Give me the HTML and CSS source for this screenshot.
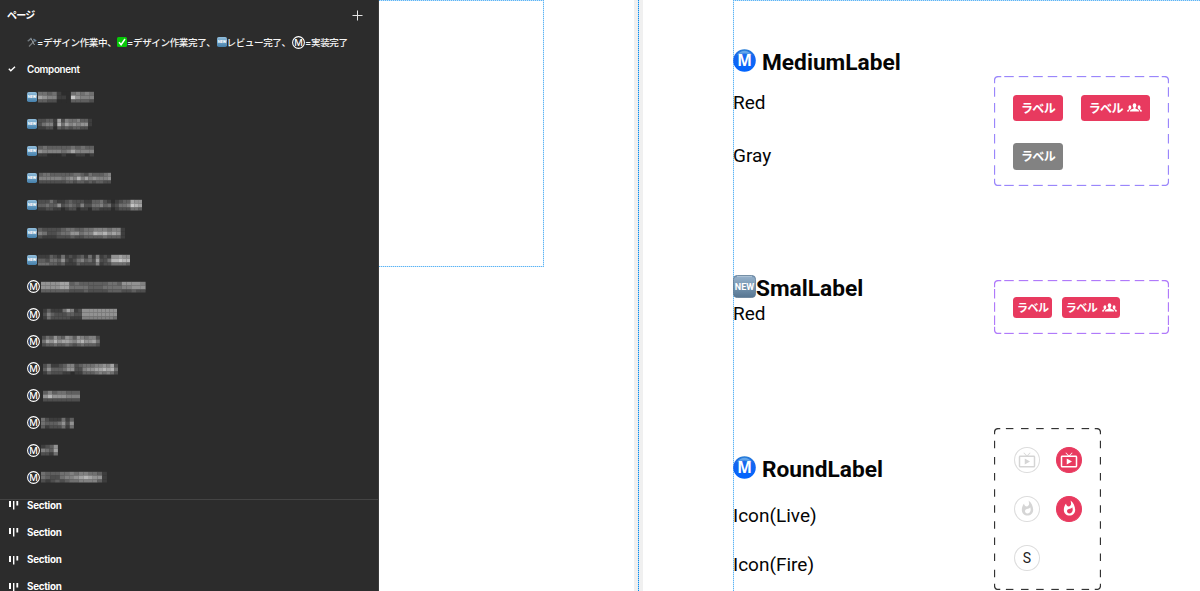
FILE: index.html
```html
<!DOCTYPE html>
<html lang="ja">
<head>
<meta charset="utf-8">
<title>Component</title>
<link rel="stylesheet" href="styles.css">
</head>
<body>
<svg class="defs" width="0" height="0" aria-hidden="true">
  <defs>
    <linearGradient id="newFill" x1="0" y1="0" x2="0" y2="1"><stop offset="0" stop-color="#7196b8"/><stop offset=".12" stop-color="#91adc7"/><stop offset=".5" stop-color="#7595b0"/><stop offset="1" stop-color="#567591"/></linearGradient>
    <linearGradient id="newSmall" x1="0" y1="0" x2="0" y2="1"><stop offset="0" stop-color="#91bddb"/><stop offset="1" stop-color="#4680ab"/></linearGradient>
    <linearGradient id="metroFill" x1="0" y1="0" x2="0" y2="1"><stop offset="0" stop-color="#287ed5"/><stop offset=".3" stop-color="#1767ef"/><stop offset="1" stop-color="#0064ff"/></linearGradient>
    <symbol id="new" viewBox="0 0 10 10"><rect width="10" height="10" rx="1.8" fill="url(#newSmall)"/><text x="5" y="6.4" class="new-text-small">NEW</text></symbol>
    <symbol id="new-large" viewBox="0 0 23 23"><rect x=".4" y=".4" width="22.2" height="22.2" rx="4" fill="url(#newFill)" stroke="#5a7690" stroke-width=".8"/><path d="M4 1.7h15" stroke="#b7cadb"/><text x="11.5" y="14.8" class="new-text">NEW</text></symbol>
    <symbol id="m" viewBox="0 0 13 13"><circle cx="6.5" cy="6.5" r="5.9" fill="none" stroke="#fff" stroke-width="1.1"/><text x="6.5" y="9.8" class="m-text">M</text></symbol>
    <symbol id="metro" viewBox="0 0 23 23"><circle cx="11.5" cy="11.5" r="11.3" fill="url(#metroFill)"/><path d="M4 5.8Q11.5-2.5 19 5.8Q11.5 3.2 4 5.8" fill="#79b6ed" opacity=".75"/><text x="11.5" y="17" class="metro-text">M</text></symbol>
    <symbol id="people" viewBox="0 0 15 9"><g fill="#fff"><ellipse cx="7.5" cy="2.5" rx="1.8" ry="2.3"/><path d="M6.6 3.5h1.8v2.1l2.8 1.1q.9.4.9 1.9H2.9q0-1.5.9-1.9l2.8-1.1zM2.9 2.2Q4.6 2.2 4.3 4.4L3.8 5.9 2.3 7.1 2 8.6H0Q0 7.2.9 6.8L2.2 6.2Q1.4 5.6 1.5 3.8 1.6 2.2 2.9 2.2M12.1 2.2Q10.4 2.2 10.7 4.4L11.2 5.9 12.7 7.1 13 8.6h2Q15 7.2 14.1 6.8L12.8 6.2Q13.6 5.6 13.5 3.8 13.4 2.2 12.1 2.2"/></g></symbol>
    <symbol id="live" viewBox="0 0 24 24"><path fill="currentColor" d="M21 6h-7.59l3.29-3.29L16 2l-4 4-4-4-.71.71L10.59 6H3c-1.1 0-2 .89-2 2v12c0 1.1.9 2 2 2h18c1.1 0 2-.9 2-2V8c0-1.11-.9-2-2-2zm0 14H3V8h18v12zM9 10v8l7-4z"/></symbol>
    <symbol id="fire" viewBox="0 0 24 24"><path fill="currentColor" d="M13.5.67s.74 2.65.74 4.8c0 2.06-1.35 3.73-3.41 3.73-2.07 0-3.63-1.67-3.63-3.73l.03-.36C5.21 7.51 4 10.62 4 14c0 4.42 3.58 8 8 8s8-3.58 8-8C20 8.61 17.41 3.8 13.5.67zM11.71 19c-1.78 0-3.22-1.4-3.22-3.14 0-1.62 1.05-2.76 2.81-3.12 1.77-.36 3.6-1.21 4.62-2.58.39 1.29.59 2.65.59 4.04 0 2.65-2.15 4.8-4.8 4.8z"/></symbol>
    <symbol id="section" viewBox="0 0 10 10"><path fill="#fff" d="M0 1h2v6H0zM4 1h1.4v8.5H4zM7.4 1h1.8v4.5H7.4z"/></symbol>
  </defs>
</svg>
<div class="app">
  <aside class="sidebar">
    <header class="sidebar-head"><span>ページ</span><svg width="11" height="11"><path d="M5.5.5v10M.5 5.5h10" stroke="#e4e4e4"/></svg></header>
    <div class="pages">
      <div class="page-row legend">
        <span class="seg seg-tool"><svg width="10" height="11" viewBox="0 0 10 11"><path d="M2 9.5 8.3 3" stroke="#777b7d" stroke-width="1.2"/><path d="M2 3.2 4 1.6 7.5 8" stroke="#9aa0a3" stroke-width="1" fill="none"/><path d="M6.4 2.1l2.8 2" stroke="#697f94" stroke-width="1.7"/><path d="M.7 4.2 4.5 1" stroke="#737b80" stroke-width="1.4"/></svg><b>=デザイン作業中、</b></span>
        <span class="seg seg-done"><svg width="10" height="10"><rect width="10" height="10" rx="1.5" fill="#08c808"/><path d="m2 5.2 2.1 2.5L8 2" fill="none" stroke="#fff" stroke-width="1.5"/></svg><b>=デザイン作業完了、</b></span>
        <span class="seg seg-review"><svg width="10" height="10"><use href="#new"/></svg><b>レビュー完了、</b></span>
        <span class="seg seg-built"><svg width="13" height="13"><use href="#m"/></svg><b>=実装完了</b></span>
      </div>
      <div class="page-row current"><svg class="check" width="8" height="6"><path d="m.8 2.8 2 2L7 .8" fill="none" stroke="#fff" stroke-width="1.4"/></svg>Component</div>
    </div>
    <div class="sections">
      <div class="section-row"><svg width="10" height="10"><use href="#section"/></svg>Section</div>
      <div class="section-row"><svg width="10" height="10"><use href="#section"/></svg>Section</div>
      <div class="section-row"><svg width="10" height="10"><use href="#section"/></svg>Section</div>
      <div class="section-row"><svg width="10" height="10"><use href="#section"/></svg>Section</div>
    </div>
  </aside>
  <main class="canvas">
    <div class="frame frame-left"></div>
    <div class="gutter"></div>
    <div class="frame frame-main"></div>

    <h2 class="title title-medium"><svg width="23" height="23"><use href="#metro"/></svg><span>MediumLabel</span></h2>
    <p class="note note-red">Red</p>
    <p class="note note-gray">Gray</p>
    <h2 class="title title-small"><svg width="23" height="23"><use href="#new-large"/></svg><span>SmalLabel</span></h2>
    <p class="note note-small-red">Red</p>
    <h2 class="title title-round"><svg width="23" height="23"><use href="#metro"/></svg><span>RoundLabel</span></h2>
    <p class="note note-live">Icon(Live)</p>
    <p class="note note-fire">Icon(Fire)</p>

    <section class="variants variants-medium">
      <svg class="outline" data-color="#9a86fb" data-dash="9.5" data-nx="12" data-ny="7"></svg>
      <div class="pair"><span class="tag">ラベル</span><span class="tag tag-wide">ラベル<svg width="15" height="9"><use href="#people"/></svg></span></div>
      <div class="pair"><span class="tag tag-gray">ラベル</span></div>
    </section>
    <section class="variants variants-small">
      <svg class="outline" data-color="#b07afa" data-dash="9.5" data-nx="12" data-ny="4"></svg>
      <div class="pair"><span class="tag">ラベル</span><span class="tag tag-wide">ラベル<svg width="15" height="9"><use href="#people"/></svg></span></div>
    </section>
    <section class="variants variants-round">
      <svg class="outline" data-color="#333" data-dash="7.5" data-nx="7" data-ny="10"></svg>
      <div class="pair"><span class="round"><svg width="18" height="18"><use href="#live"/></svg></span><span class="round round-on"><svg width="18" height="18"><use href="#live"/></svg></span></div>
      <div class="pair"><span class="round"><svg width="17" height="17"><use href="#fire"/></svg></span><span class="round round-on"><svg width="17" height="17"><use href="#fire"/></svg></span></div>
      <div class="pair"><span class="round round-s">S</span></div>
    </section>
  </main>
</div>
<script src="script.js"></script>
</body>
</html>
```
FILE: styles.css
```css
* { box-sizing: border-box; }
body { margin: 0; background: #fff; font-family: Inter, "Noto Sans CJK JP", sans-serif; }
.defs { position: absolute; }
svg { display: block; flex: none; }
.app { display: grid; grid-template-columns: 379px 1fr; height: 591px; overflow: hidden; }

.sidebar { display: flex; flex-direction: column; background: #2c2c2c; color: #fff; border-right: 1px solid #3b3b3b; overflow: hidden; }
.sidebar-head { display: flex; align-items: center; justify-content: space-between; flex: none; height: 28.7px; padding: 2px 15px 0 7px; font-size: 10px; font-weight: 700; letter-spacing: -.8px; }
.sidebar-head span { margin-top: -2px; }
.pages { flex: none; height: 471.3px; border-bottom: 1px solid #444; }
.page-row { display: flex; align-items: center; height: 27.2px; padding-left: 27px; font-size: 10px; }
.legend { color: #f4f4f4; font-size: 9.6px; white-space: nowrap; }
.seg { display: flex; align-items: center; flex: none; }
.seg b { font-weight: 500; letter-spacing: -.42px; }
.seg-tool { width: 90px; }
.seg-done { width: 99.5px; }
.seg-review { width: 75.5px; }
.current { padding-left: 8px; font-size: 9.8px; font-weight: 600; letter-spacing: -.3px; gap: 11px; }
.sections { flex: 1; overflow: hidden; }
.section-row { display: flex; align-items: center; gap: 8px; height: 27.2px; padding-left: 9px; font-size: 9.8px; font-weight: 700; letter-spacing: -.25px; }
.section-row:first-child { margin-top: -8.3px; }

.new-text-small { font: 700 4px Roboto, sans-serif; fill: #fff; text-anchor: middle; }
.new-text { font: 700 9px Roboto, sans-serif; fill: #fff; text-anchor: middle; }
.m-text { font: 500 9.4px Inter, sans-serif; fill: #fff; text-anchor: middle; }
.metro-text { font: 700 15.5px "Open Sans", sans-serif; fill: #fff; text-anchor: middle; }

/* The canvas is a free surface: its items are placed by coordinates. */
.canvas { position: relative; background: #fff; overflow: hidden; }
.frame { position: absolute; --h: repeating-linear-gradient(90deg, #5cb4f5 0 1px, #c4e4fb 1px 2px); --v: repeating-linear-gradient(#5cb4f5 0 1px, #c4e4fb 1px 2px); }
.frame-left { left: 0; top: 0; width: 165px; height: 267px; background: var(--h) 0 0 / 100% 1px no-repeat, var(--h) 0 100% / 100% 1px no-repeat, var(--v) 100% 0 / 1px 100% no-repeat; }
.frame-main { left: 354px; top: 0; width: 467px; height: 591px; background: var(--h) 0 0 / 100% 1px no-repeat, var(--v) 0 0 / 1px 100% no-repeat; }
.gutter { position: absolute; left: 255px; top: 0; width: 9px; height: 591px; background: repeating-linear-gradient(#0b8cef 0 1px, #9fd2f8 1px 2px) 4px 0 / 1px 100% no-repeat #f0f0f0; }
.title, .note { position: absolute; left: 354px; margin: 0; font-family: Roboto, sans-serif; color: #050505; white-space: nowrap; }
.title { display: flex; gap: 6px; font-size: 22.7px; font-weight: 700; line-height: 27px; }
.note { font-size: 19px; font-weight: 400; line-height: 22px; }
.title-medium { top: 49px; }
.title-small { top: 275px; gap: 0; }
.title-round { top: 456px; }
.note-red { top: 92px; }
.note-gray { top: 145px; }
.note-small-red { top: 303px; }
.note-live { top: 505px; }
.note-fire { top: 554px; }

.variants { position: absolute; left: 615px; display: flex; flex-direction: column; }
.outline { position: absolute; inset: 0; width: 100%; height: 100%; }
.pair { display: flex; }
.variants-medium { top: 76px; width: 175px; height: 110px; padding: 18.5px 0 0 19.3px; gap: 22px; }
.variants-medium .pair { gap: 18.5px; }
.tag { display: flex; align-items: center; justify-content: center; width: 49.5px; height: 26.5px; border-radius: 3.5px; background: #e83a5f; color: #fff; font: 700 12px/1 "Noto Sans CJK JP", sans-serif; letter-spacing: -.6px; }
.tag svg { margin-left: 4.5px; }
.tag-wide { width: 68.5px; }
.tag-gray { background: #828282; }
.variants-small { top: 280px; width: 175px; height: 54px; padding: 17px 0 0 19.3px; }
.variants-small .pair { gap: 10px; }
.variants-small .tag { width: 39px; height: 20.5px; font-size: 11px; letter-spacing: -.5px; }
.variants-small .tag-wide { width: 58px; }
.variants-round { top: 428px; width: 107px; height: 162px; padding: 18.5px 0 0 20px; gap: 22.7px; }
.variants-round .pair { gap: 16px; }
.round { display: flex; align-items: center; justify-content: center; width: 26px; height: 26.5px; border: 1px solid #ddd; border-radius: 50%; color: #d5d5d5; }
.round-on { background: #e83a5f; border-color: #e83a5f; color: #fff; }
.round-s { color: #222; font: 400 14px Roboto, sans-serif; }
```
FILE: script.js
```js
// Redacted page names. Each line holds brightness levels 0-9, one digit per cell.
const NS = 'http://www.w3.org/2000/svg';
const pages = [
  ['new', 38, 4.7, ['443410045454', '765511096555', '332200033332']],
  ['new', 38, 3.85, ['22331725445331', '24551847565661', '11220323233220']],
  ['new', 38, 4.7, ['343333343433', '655554575555', '110001001101']],
  ['new', 39, 3.8, ['3443333334432433345', '5555554565857565556', '2222222332332323322']],
  ['new', 38, 3.85, ['222421123222113342101233766', '334336234325224453412445987', '112211012201102211101222443']],
  ['new', 38, 4.6, ['3222234433445554551', '5422344664558786761', '2111222322333343331']],
  ['new', 38, 3.85, ['111321412123141512166766', '332443621245342722488988', '444332311132222512244443']],
  ['m', 41, 4.75, ['6666773433333344366665', '6666774444333444455666', '3333332223222233322322']],
  ['m', 43, 3.9, ['1311147512666666666', '2532223322666666666', '1422222111555555554']],
  ['m', 42, 3.85, ['243643653654552', '476867765786674', '233433432343332']],
  ['m', 43, 3.95, ['2411235523444556572', '3633346622566778784', '1322211011333454542']],
  ['m', 42.5, 4.7, ['35344333', '68666555', '22222222']],
  ['m', 41, 4.1, ['42111413', '43334626', '31222414']],
  ['m', 41, 4.2, ['1236', '5437', '2214']],
  ['m', 41, 4.7, ['43334454554431', '43224556787661', '21232344555531']]
];

function el(name, attrs, parent) {
  const node = document.createElementNS(NS, name);
  for (const key in attrs) node.setAttribute(key, attrs[key]);
  parent.appendChild(node);
  return node;
}

const list = document.querySelector('.pages');
for (const [icon, start, cell, lines] of pages) {
  const row = document.createElement('div');
  row.className = 'page-row';
  const size = icon === 'new' ? 10 : 13;
  el('use', { href: '#' + icon }, el('svg', { width: size, height: size }, row));
  const width = lines[0].length * cell;
  const svg = el('svg', { width, height: 12 }, row);
  svg.style.marginLeft = start - 27 - size + 'px';
  const tops = [0.8, 4.5, 8.5], heights = [3.8, 4.1, 3];
  lines.forEach((line, y) => [...line].forEach((level, x) => {
    const v = 44 + level * 17;
    el('rect', { x: x * cell, y: tops[y], width: cell + 0.1, height: heights[y], fill: `rgb(${v},${v},${v})` }, svg);
  }));
  list.appendChild(row);
}

// Dashed component outlines: a dash is centred on every corner.
for (const svg of document.querySelectorAll('.outline')) {
  const { color, dash, nx, ny } = svg.dataset;
  const w = svg.clientWidth - 1, h = svg.clientHeight - 1, half = dash / 2, r = 4;
  const side = (x1, y1, x2, y2, len, n) => {
    const step = len / n;
    for (let i = 1; i < n; i++) {
      const a = (i * step - half) / len, b = (i * step + half) / len;
      el('path', { d: `M${x1 + (x2 - x1) * a + .5} ${y1 + (y2 - y1) * a + .5}L${x1 + (x2 - x1) * b + .5} ${y1 + (y2 - y1) * b + .5}`, stroke: color, 'stroke-width': 1.3 }, svg);
    }
  };
  side(0, 0, w, 0, w, nx);
  side(0, h, w, h, w, nx);
  side(0, 0, 0, h, h, ny);
  side(w, 0, w, h, h, ny);
  const e = half + 2;
  const corner = (x, y, sx, sy) => el('path', { d: `M${x + sx * e} ${y}H${x + sx * r}Q${x} ${y} ${x} ${y + sy * r}V${y + sy * e}`, fill: 'none', stroke: color, 'stroke-width': 1.3 }, svg);
  corner(.5, .5, 1, 1);
  corner(w + .5, .5, -1, 1);
  corner(.5, h + .5, 1, -1);
  corner(w + .5, h + .5, -1, -1);
}
```
